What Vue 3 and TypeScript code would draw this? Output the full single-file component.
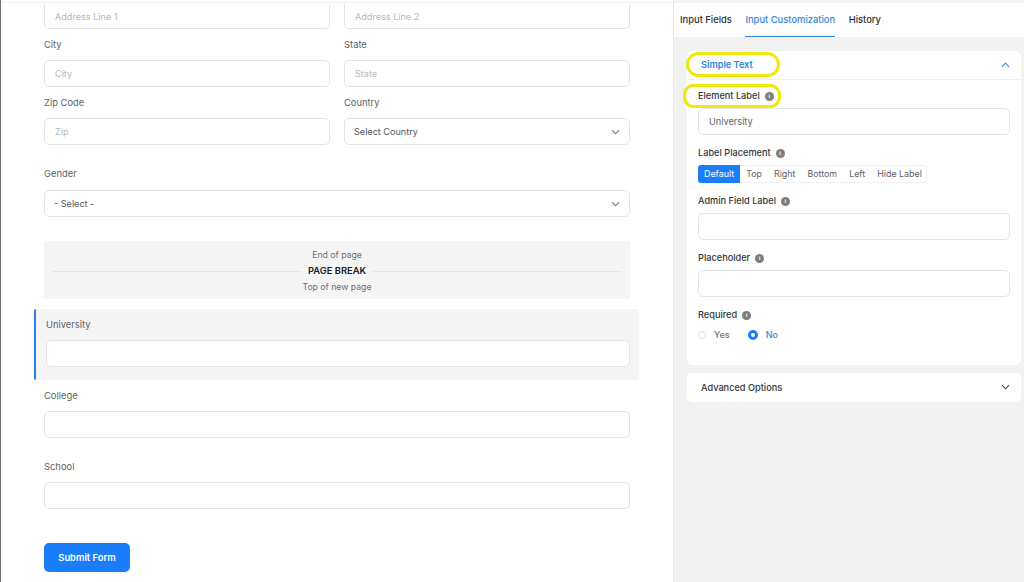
<script setup lang="ts">
const tabs = ['Input Fields', 'Input Customization', 'History']
const placements = ['Default', 'Top', 'Right', 'Bottom', 'Left', 'Hide Label']
const rows = [
  [{ label: 'City', ph: 'City' }, { label: 'State', ph: 'State' }],
  [{ label: 'Zip Code', ph: 'Zip' }, { label: 'Country', ph: '' }]
]
</script>

<template>
  <div class="page">
    <main class="form">
      <div class="cols first">
        <div class="input ph">Address Line 1</div>
        <div class="input ph">Address Line 2</div>
      </div>
      <div v-for="(row, i) in rows" :key="i" class="cols">
        <div v-for="f in row" :key="f.label" class="field">
          <div class="label">{{ f.label }}</div>
          <div v-if="f.ph" class="input ph">{{ f.ph }}</div>
          <div v-else class="input select">
            <span>Select Country</span>
            <svg class="chev" viewBox="0 0 10 6"><path d="M1 1l4 4 4-4" /></svg>
          </div>
        </div>
      </div>

      <div class="field gender">
        <div class="label">Gender</div>
        <div class="input select">
          <span>- Select -</span>
          <svg class="chev" viewBox="0 0 10 6"><path d="M1 1l4 4 4-4" /></svg>
        </div>
      </div>

      <section class="break">
        <div class="break-small">End of page</div>
        <div class="break-line"><span>PAGE BREAK</span></div>
        <div class="break-small">Top of new page</div>
      </section>

      <section class="active">
        <div class="label">University</div>
        <div class="input"></div>
      </section>

      <div class="field college">
        <div class="label">College</div>
        <div class="input"></div>
      </div>
      <div class="field school">
        <div class="label">School</div>
        <div class="input"></div>
      </div>
      <button class="submit" type="button">Submit Form</button>
    </main>

    <aside class="side">
      <nav class="tabs">
        <span v-for="(t, i) in tabs" :key="t" class="tab" :class="{ on: i === 1 }">{{ t }}</span>
      </nav>
      <div class="side-body">
        <div class="card">
          <header class="card-head">
            <span class="mark mark-title">Simple Text</span>
            <svg class="chev up" viewBox="0 0 10 6"><path d="M1 5l4-4 4 4" /></svg>
          </header>
          <div class="card-body">
            <div class="s-label el-label">
              <span class="mark mark-label">Element Label <i class="info">i</i></span>
            </div>
            <div class="input val">University</div>

            <div class="s-label lp">Label Placement <i class="info">i</i></div>
            <div class="seg">
              <span v-for="(p, i) in placements" :key="p" class="seg-item" :class="{ on: i === 0 }">{{ p }}</span>
            </div>

            <div class="s-label afl">Admin Field Label <i class="info">i</i></div>
            <div class="input"></div>

            <div class="s-label pl">Placeholder <i class="info">i</i></div>
            <div class="input"></div>

            <div class="s-label req">Required <i class="info">i</i></div>
            <div class="radios">
              <span class="radio"><i class="dot"></i>Yes</span>
              <span class="radio sel"><i class="dot"></i>No</span>
            </div>
          </div>
        </div>
        <div class="card adv">
          <span>Advanced Options</span>
          <svg class="chev dark" viewBox="0 0 10 6"><path d="M1 1l4 4 4-4" /></svg>
        </div>
      </div>
    </aside>
  </div>
</template>

<style>
html, body { margin: 0; background: #fff; overflow: hidden; }
</style>

<style scoped>
.page {
  width: 1024px;
  height: 582px;
  display: flex;
  overflow: hidden;
  box-sizing: border-box;
  border-left: 1px solid #777;
  font-family: Inter, "Liberation Sans", sans-serif;
  font-size: 9.4px;
  color: #606266;
}
.form {
  width: 672px;
  flex: none;
  box-sizing: border-box;
  padding: 1px 43px 0 43px;
  border-top: 1px solid #f0f0f0;
  margin-top: 2px;
  display: flex;
  flex-direction: column;
}
.cols {
  display: grid;
  grid-template-columns: 286px 286px;
  gap: 14px;
  margin-top: 10px;
}
.cols.first { margin-top: 0; }
.cols.first .input { height: 25px; border-top: none; border-radius: 0 0 5px 5px; }
.field { display: flex; flex-direction: column; }
.label { line-height: 12px; margin-bottom: 9px; color: #606266; }
.input {
  height: 27px;
  box-sizing: border-box;
  border: 1px solid #e2e4e8;
  border-radius: 5px;
  background: #fff;
  display: flex;
  align-items: center;
  padding: 0 10px;
}
.ph { color: #b4b7bd; font-size: 9.1px; }
.select { justify-content: space-between; color: #53565c; padding: 0 9px; font-size: 9.1px; }
.chev { width: 9px; height: 6px; fill: none; stroke: #777; stroke-width: 1.2; }
.gender { margin-top: 23px; }
.gender .label { margin-bottom: 10px; }
.break {
  margin-top: 24px;
  height: 58px;
  box-sizing: border-box;
  padding-top: 2px;
  background: #f5f5f5;
  display: flex;
  flex-direction: column;
  align-items: center;
  justify-content: center;
  gap: 4px;
}
.break-small { font-size: 8.7px; line-height: 12px; color: #6b6e73; }
.break-line {
  width: 570px;
  display: flex;
  align-items: center;
  justify-content: center;
  background: linear-gradient(#e6e6e6, #e6e6e6) center / 100% 1px no-repeat;
  font-weight: 600;
  color: #222;
  line-height: 12px;
}
.break-line span { background: #f5f5f5; padding: 0 7px; }
.active {
  margin: 10px -9px 0 -10px;
  height: 71px;
  box-sizing: border-box;
  background: #f5f5f5;
  border-left: 2px solid #2b82e6;
  border-radius: 2px 0 0 2px;
  padding: 10px 9px 0 10px;
}
.active .label { margin-bottom: 9px; }
.college { margin-top: 10px; }
.school { margin-top: 23px; }
.college .label, .school .label { margin-bottom: 9px; }
.submit {
  margin-top: 34px;
  width: 86px;
  height: 29px;
  flex: none;
  border: none;
  border-radius: 5px;
  background: #1a7efb;
  color: #fff;
  font: 600 9.4px Inter, "Liberation Sans", sans-serif;
  padding: 0;
}

.side {
  flex: 1;
  min-width: 0;
  background: #f2f2f2;
  border-left: 1px solid #e8e8e8;
  display: flex;
  flex-direction: column;
}
.tabs {
  height: 34px;
  margin-top: 3px;
  background: #fff;
  display: flex;
  gap: 13.5px;
  padding-left: 6px;
  box-sizing: border-box;
  flex: none;
}
.tab {
  font-size: 9.4px;
  font-weight: 500;
  color: #2c2f33;
  line-height: 33px;
  height: 34px;
  box-sizing: border-box;
  white-space: nowrap;
}
.tab.on { color: #2e86de; border-bottom: 1px solid #2e86de; }
.side-body {
  padding: 14px 3px 0 13px;
  display: flex;
  flex-direction: column;
  gap: 8px;
}
.card { background: #fff; border-radius: 5px; font-size: 9.2px; }
.card-head {
  height: 29px;
  box-sizing: border-box;
  border-bottom: 1px solid #efefef;
  display: flex;
  align-items: center;
  justify-content: space-between;
  padding: 0 11px 1px 14px;
  color: #2e86de;
  font-weight: 600;
}
.chev.up { stroke: #2e86de; }
.chev.dark { stroke: #444; }
.mark { position: relative; }
.mark::after {
  content: "";
  position: absolute;
  border: 3px solid #f1e80b;
  border-radius: 13px;
  pointer-events: none;
}
.mark-title::after { inset: -7px -27px -7px -15px; }
.mark-label::after { inset: -6px -7px -6px -15px; border-radius: 11px; }
.card-body { padding: 0 11px 24px; }
.s-label {
  color: #33363a;
  font-weight: 500;
  line-height: 12px;
  display: flex;
  align-items: center;
}
.el-label { margin-top: 10px; margin-bottom: 6px; }
.mark-label { display: flex; align-items: center; }
.lp { margin-top: 12px; margin-bottom: 6px; }
.afl { margin-top: 12px; margin-bottom: 6px; }
.pl { margin-top: 12px; margin-bottom: 6px; }
.req { margin-top: 12px; margin-bottom: 8px; }
.info {
  width: 9px;
  height: 9px;
  border-radius: 50%;
  background: #7d7d7d;
  color: #fff;
  font: 700 6px/9px "Liberation Sans", sans-serif;
  text-align: center;
  margin-left: 5px;
  display: inline-block;
}
.val { color: #606266; }
.seg {
  width: 229px;
  height: 18px;
  border: 1px solid #f0f0f0;
  border-radius: 3px;
  box-sizing: border-box;
  display: flex;
  font-size: 8.9px;
}
.seg-item { padding: 0 6px; line-height: 16px; color: #606266; white-space: nowrap; }
.seg-item.on {
  margin: -1px 0 -1px -1px;
  line-height: 18px;
  background: #1a7efb;
  color: #fff;
  border-radius: 3px 0 0 3px;
}
.radios { display: flex; gap: 18px; line-height: 12px; }
.radio { display: flex; align-items: center; gap: 8px; font-weight: 500; color: #707377; font-size: 9px; }
.radio .dot {
  width: 8px;
  height: 8px;
  box-sizing: border-box;
  border: 1px solid #dcdfe3;
  border-radius: 50%;
  background: #fff;
}
.radio.sel { color: #2e86de; }
.radio.sel .dot { width: 10px; height: 10px; border: 3px solid #1a7efb; }
.adv {
  height: 29px;
  display: flex;
  align-items: center;
  justify-content: space-between;
  padding: 0 11px 1px 14px;
  box-sizing: border-box;
  font-weight: 500;
  color: #33363a;
}
</style>
